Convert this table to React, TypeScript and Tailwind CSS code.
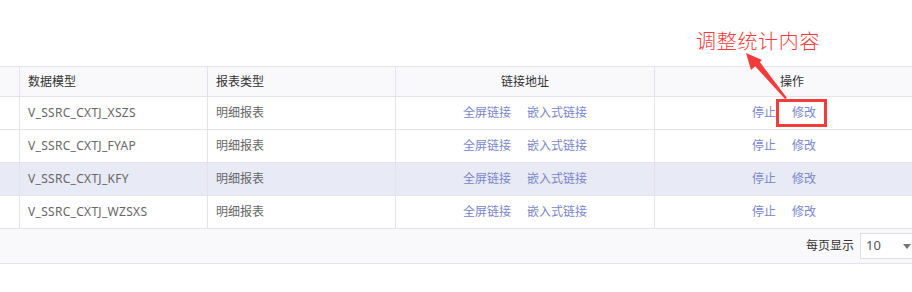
import React from 'react';

const rows = [
  { model: 'V_SSRC_CXTJ_XSZS', active: false },
  { model: 'V_SSRC_CXTJ_FYAP', active: false },
  { model: 'V_SSRC_CXTJ_KFY', active: true },
  { model: 'V_SSRC_CXTJ_WZSXS', active: false },
];

const font = { fontFamily: '"Noto Sans", "Noto Sans CJK SC", sans-serif' };

export default function App() {
  return (
    <div
      className="relative w-[912px] h-[292px] overflow-hidden bg-white text-[12px]"
      style={font}
    >
      <div className="h-[66px]" />

      <div className="w-[940px] border-t border-[#e6e1ec]">
        {/* header */}
        <div className="flex h-[30px] border-b border-[#e6e1ec] bg-[#f9f8fb] text-[#333]">
          <div className="w-[20px] border-r border-[#e6e1ec]" />
          <div className="w-[188px] border-r border-[#e6e1ec] px-2 flex items-center">数据模型</div>
          <div className="w-[188px] border-r border-[#e6e1ec] px-2 flex items-center">报表类型</div>
          <div className="w-[259px] border-r border-[#e6e1ec] flex items-center justify-center">链接地址</div>
          <div className="w-[274px] flex items-center justify-center">操作</div>
        </div>

        {rows.map((r) => (
          <div
            key={r.model}
            className={`flex h-[33px] border-b border-[#e6e1ec] ${r.active ? 'bg-[#e8eaf6]' : 'bg-white'}`}
          >
            <div className="w-[20px] border-r border-[#e6e1ec]" />
            <div className="w-[188px] border-r border-[#e6e1ec] px-2 flex items-center text-[#666] tracking-[0.3px]">{r.model}</div>
            <div className="w-[188px] border-r border-[#e6e1ec] px-2 flex items-center text-[#666]">明细报表</div>
            <div className="w-[259px] border-r border-[#e6e1ec] flex items-center justify-center gap-4 text-[#7986cb]">
              <span>全屏链接</span>
              <span>嵌入式链接</span>
            </div>
            <div className="w-[274px] flex items-center justify-center gap-4 pr-4 text-[#7986cb]">
              <span>停止</span>
              <span>修改</span>
            </div>
          </div>
        ))}

        {/* footer */}
        <div className="flex h-[35px] items-center justify-end border-b border-[#e6e1ec] bg-[#f9f8fb]">
          <span className="text-[#333] mr-[6px]">每页显示</span>
          <div className="relative flex h-[26px] w-[80px] items-center border border-[#ddd] bg-white pl-[5px] text-[#555] text-[13px]">
            10
            <span className="absolute left-[42px] top-[10px] h-0 w-0 border-x-[4px] border-t-[5px] border-x-transparent border-t-[#777]" />
          </div>
        </div>
      </div>

      {/* annotation */}
      <div className="absolute left-[696px] top-[28px] text-[20px] font-light leading-[28px] tracking-[0.7px] text-[#f23b3b]">
        调整统计内容
      </div>
      <div className="absolute left-[776px] top-[99px] h-[28px] w-[51px] border-[3px] border-[#f23b3b]" />
      <svg className="absolute left-0 top-0" width="912" height="292" viewBox="0 0 912 292">
        <polygon points="787,98 785,99 754,65 759,61" fill="#f23b3b" />
        <polygon points="746,53 762,60 751,70" fill="#f23b3b" />
      </svg>
    </div>
  );
}
